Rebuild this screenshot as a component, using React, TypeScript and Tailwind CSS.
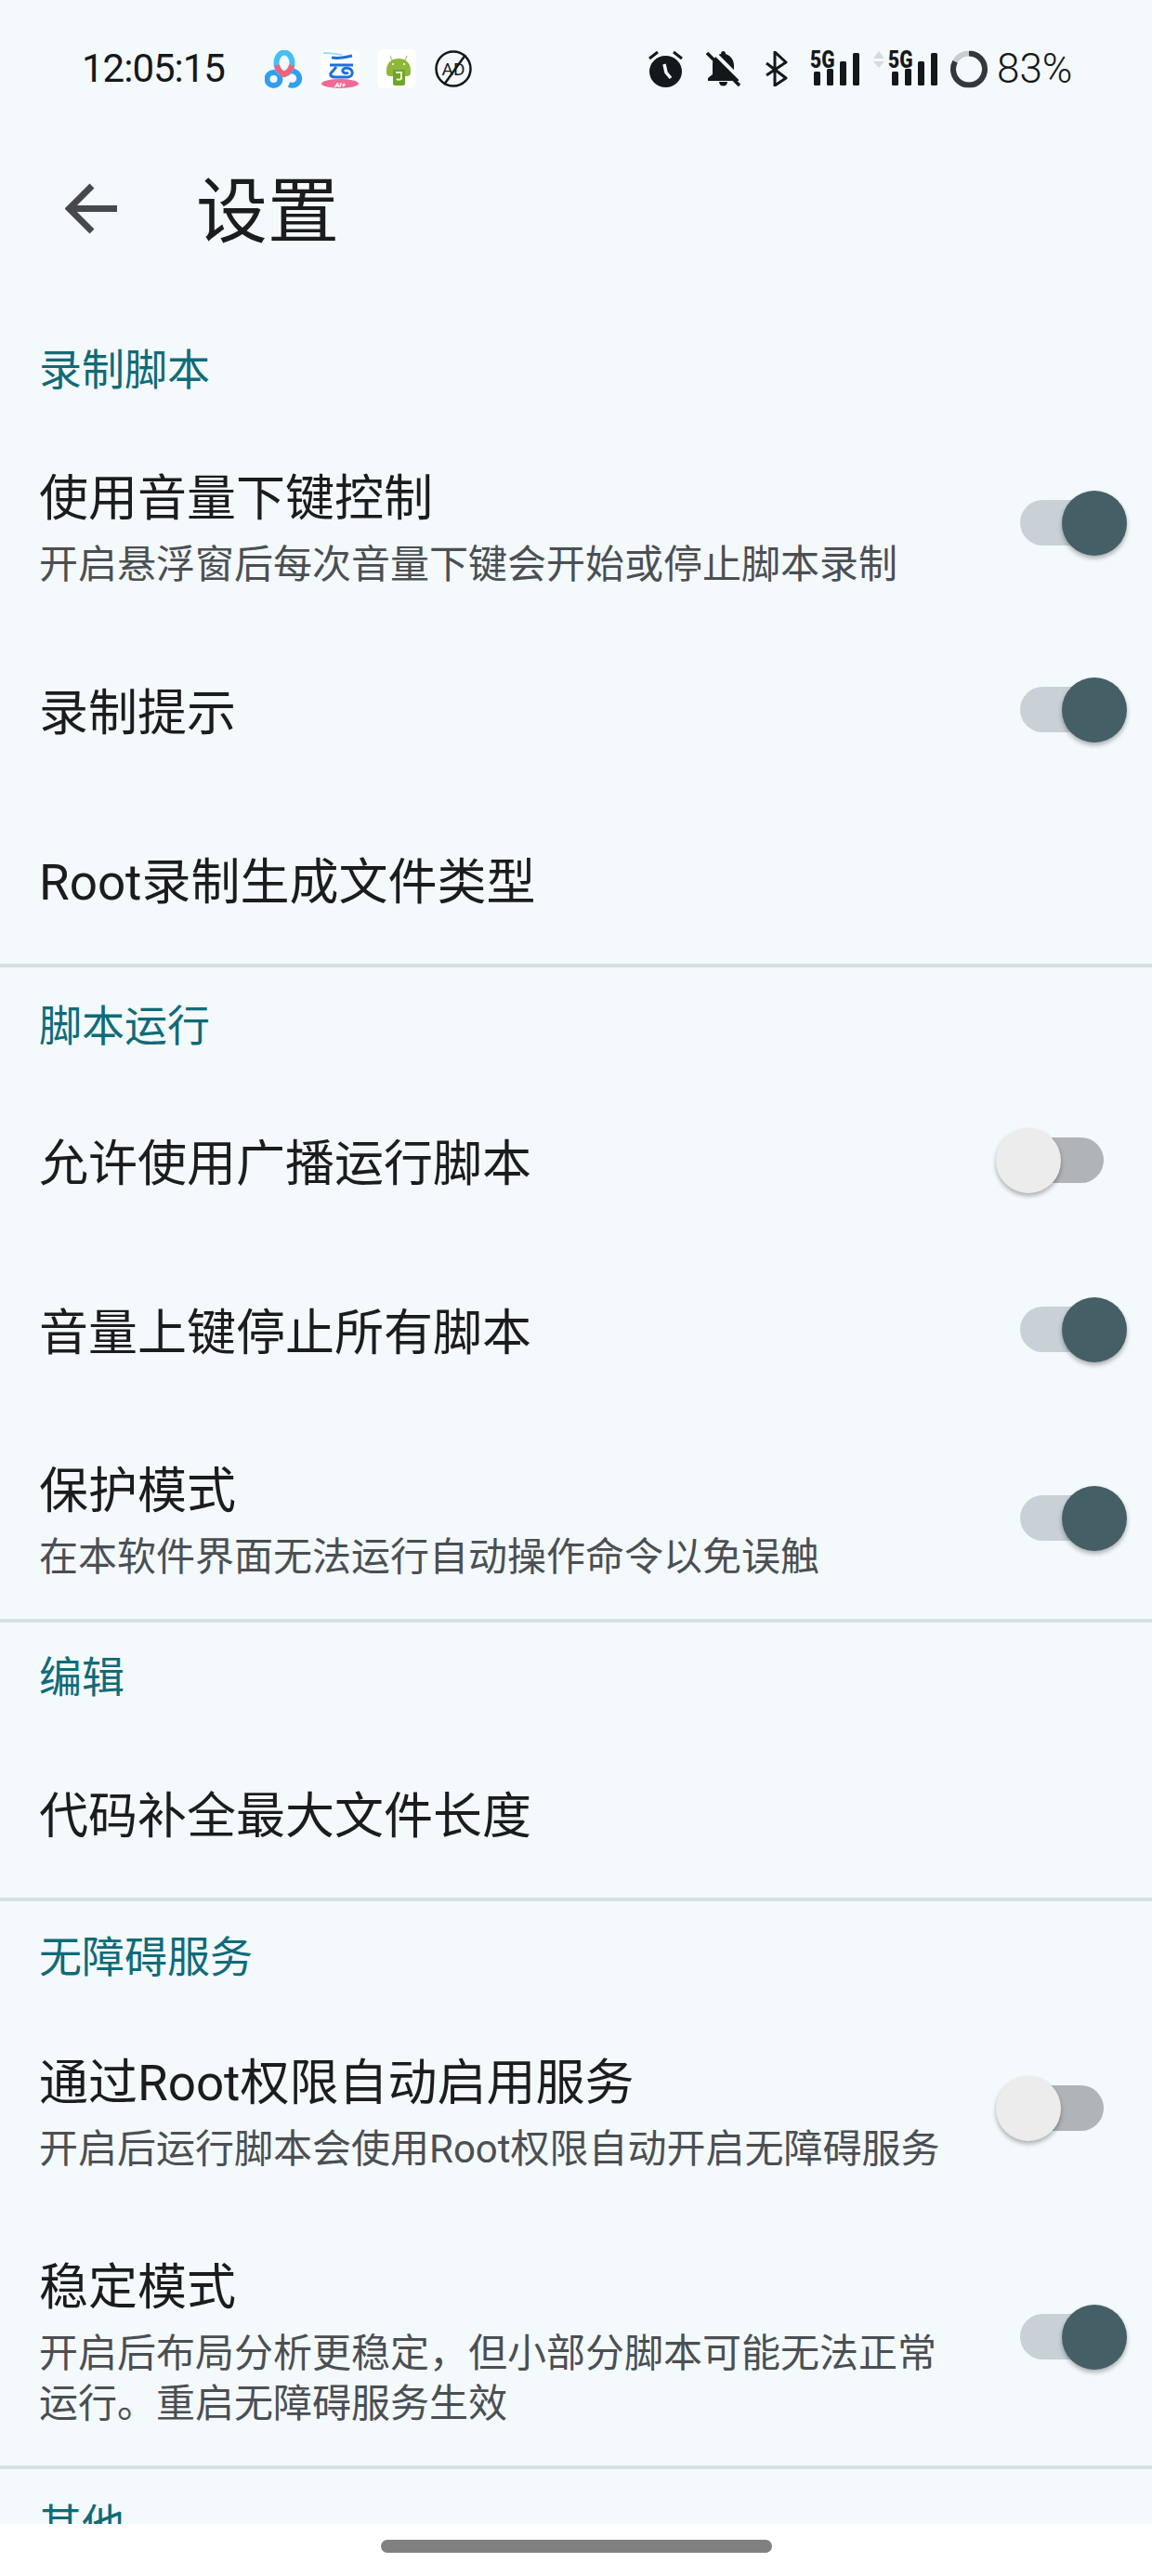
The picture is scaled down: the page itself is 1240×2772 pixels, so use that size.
import React from "react";

const Toggle = ({ on, className = "" }: { on: boolean; className?: string }) => (
  <div className={`relative h-[70px] w-[141px] shrink-0 ${className}`}>
    <div
      className={`absolute left-[26px] top-[10px] h-[49px] w-[90px] rounded-full ${on ? "bg-[#c9d1d7]" : "bg-[#b0b4b7]"}`}
    />
    <div
      className={`absolute top-0 h-[70px] w-[70px] rounded-full shadow-[0_3px_5px_rgba(0,0,0,0.3)] ${on ? "left-[71px] bg-[#455f67]" : "left-0 bg-[#ececec]"}`}
    />
  </div>
);

const Heading = ({ children, className }: { children: React.ReactNode; className: string }) => (
  <div className={`flex items-center pl-[42px] text-[46px] text-[#0f6b78] ${className}`}>{children}</div>
);

const Divider = () => <div className="h-[4px] bg-[#d8dfe3]" />;

interface RowProps {
  title: string;
  sub?: string[];
  toggle?: boolean;
  height: string;
  textClass?: string;
  toggleClass?: string;
}

const Row = ({ title, sub, toggle, height, textClass = "", toggleClass = "mb-[5px]" }: RowProps) => (
  <div className={`flex items-center justify-between pl-[42px] pr-[27px] ${height}`}>
    <div className={textClass}>
      <div className="text-[53px] leading-[70px] text-[#1b1c1e]">{title}</div>
      {sub && (
        <div className="mt-[9px] text-[42px] leading-[54px] text-[#4b4f53]">
          {sub.map((line) => (
            <div key={line}>{line}</div>
          ))}
        </div>
      )}
    </div>
    {toggle !== undefined && <Toggle on={toggle} className={toggleClass} />}
  </div>
);

const Baidu = () => (
  <svg viewBox="0 0 42 41" className="h-[41px] w-[42px]" fill="none">
    <circle cx="9.5" cy="31" r="7" stroke="#2f9ff0" strokeWidth="6" />
    <path d="M24 24c2-2 5-2 8-1 3 1 6 5 5 9-1 5-6 7-11 5" stroke="#2f9ff0" strokeWidth="6" />
    <ellipse cx="21" cy="14" rx="8.5" ry="11.5" stroke="#45c0f7" strokeWidth="6" />
    <path d="M13 16c1 5 4 8 8 10 4-2 7-5 8-10" stroke="#f2607a" strokeWidth="6" />
  </svg>
);

const CloudAi = () => (
  <svg viewBox="0 0 42 41" className="h-[41px] w-[42px] rounded-[6px] bg-white" fill="none">
    <path d="M3 3c6 0 14 1 20 2" stroke="#9fdcf0" strokeWidth="2" />
    <path d="M12 8c6 1 14 0 22-2" stroke="#1f6fd8" strokeWidth="3" />
    <path d="M10 16h25" stroke="#1f6fd8" strokeWidth="3" />
    <path
      d="M17 18l-6 7c-1 3 2 4 5 4h13c4 0 6-3 5-6-1-4-8-5-10-2-1 3 3 5 6 3"
      stroke="#1f6fd8"
      strokeWidth="3"
    />
    <ellipse cx="21" cy="36" rx="20" ry="5" fill="#ee6b97" />
    <text x="21" y="39.5" textAnchor="middle" fontSize="8" fontWeight="700" fontStyle="italic" fill="#fff">
      AI+
    </text>
  </svg>
);

const AndroidJ = () => (
  <svg viewBox="0 0 42 42" className="h-[42px] w-[42px] rounded-[6px] bg-white" fill="none">
    <path d="M16 12l-2-5M30 12l2-5" stroke="#b9cf7e" strokeWidth="1.5" />
    <path d="M10 23c0-9 6-13 13-13s13 4 13 13v2a4 4 0 01-4 4H14a4 4 0 01-4-4z" fill="#8db83a" />
    <path d="M17 22h13v15a2 2 0 01-2 2h-9a2 2 0 01-2-2z" fill="#6ea62c" />
    <circle cx="17" cy="16" r="1" fill="#fff" />
    <circle cx="29" cy="16" r="1" fill="#fff" />
    <path d="M20 25h6v6c0 2-4 2-5 1" stroke="#f2f5d8" strokeWidth="2" />
  </svg>
);

const AdBlock = () => (
  <svg viewBox="0 0 40 40" className="h-[40px] w-[40px]" fill="none">
    <circle cx="20" cy="20" r="18.5" stroke="#15181a" strokeWidth="2.5" />
    <text x="20" y="27" textAnchor="middle" fontSize="19" fill="#15181a" fontFamily="Roboto">
      AD
    </text>
    <path d="M33 5L10 37" stroke="#15181a" strokeWidth="2.5" />
  </svg>
);

const Alarm = () => (
  <svg viewBox="0 0 37 40" className="h-[40px] w-[37px]" fill="none">
    <ellipse cx="18.5" cy="23" rx="17.5" ry="17" fill="#15181a" />
    <path d="M1 9l9-7M36 9l-9-7" stroke="#15181a" strokeWidth="3" />
    <path d="M17 15l2 9 5 6" stroke="#f4f9fc" strokeWidth="3.5" />
  </svg>
);

const BellOff = () => (
  <svg viewBox="0 0 37 39" className="h-[39px] w-[37px]" fill="none">
    <path d="M18 0a3 3 0 013 3c6 2 9 7 9 13v9l5 4v3H2v-3l5-4V13c0-4 4-9 9-10a3 3 0 012-3z" fill="#15181a" />
    <path d="M14 33h9a4.500 4.500 0 01-9 0z" fill="#15181a" />
    <path d="M5 -2l34 34" stroke="#f4f9fc" strokeWidth="4" />
    <path d="M1 2l35 35" stroke="#15181a" strokeWidth="3.5" />
  </svg>
);

const Bluetooth = () => (
  <svg viewBox="0 0 24 38" className="h-[38px] w-[24px]" fill="none">
    <path d="M1 13l21 16-12 8V1l12 11L1 26" stroke="#15181a" strokeWidth="3" strokeLinejoin="round" />
  </svg>
);

const Signal = () => (
  <div className="relative h-[40px] w-[53px]">
    <svg viewBox="0 0 53 40" className="h-[40px] w-[53px]" fill="#15181a">
      <rect x="4" y="23" width="7" height="15" rx="1.5" />
      <rect x="18" y="20" width="7" height="18" rx="1.5" />
      <rect x="32" y="12" width="7" height="26" rx="1.5" />
      <rect x="46" y="3" width="7" height="35" rx="1.5" />
    </svg>
    {/* 5G label sits over the bars, squeezed like the system font */}
    <span className="absolute left-0 top-[1px] origin-left scale-x-[0.84] text-[25px] font-black leading-[19px] text-[#15181a]">
      5G
    </span>
  </div>
);

const DataArrows = () => (
  <svg viewBox="0 0 12 40" className="h-[40px] w-[12px]" fill="#d6dadc">
    <path d="M0 9l6-8 6 8z" />
    <path d="M0 12h12l-6 7z" />
  </svg>
);

const BatteryRing = () => (
  <svg viewBox="0 0 40 40" className="h-[41px] w-[40px] -rotate-90" fill="none">
    <circle cx="20" cy="20" r="17" stroke="#c9cdd0" strokeWidth="6" />
    <circle cx="20" cy="20" r="17" stroke="#33383b" strokeWidth="6" pathLength="100" strokeDasharray="83 17" />
  </svg>
);

export default function App() {
  return (
    <div className="flex h-[2772px] w-[1240px] flex-col overflow-hidden bg-[#f4f9fc] font-['Roboto','Noto_Sans_CJK_SC',sans-serif]">
      <div className="relative flex-1 overflow-hidden">
        {/* status bar */}
        <div className="flex h-[148px] items-center pl-[88px] text-[#15181a]">
          <span className="w-[156px] text-[42px] leading-none tracking-[-1px]">12:05:15</span>
          <div className="ml-[41px]"><Baidu /></div>
          <div className="ml-[18px]"><CloudAi /></div>
          <div className="ml-[19px]"><AndroidJ /></div>
          <div className="ml-[20px]"><AdBlock /></div>
          <div className="ml-[190px]"><Alarm /></div>
          <div className="ml-[25px]"><BellOff /></div>
          <div className="ml-[27px]"><Bluetooth /></div>
          <div className="ml-[24px]"><Signal /></div>
          <div className="ml-[15px]"><DataArrows /></div>
          <div className="ml-[4px]"><Signal /></div>
          <div className="ml-[14px]"><BatteryRing /></div>
          <span className="ml-[10px] text-[44px] font-light leading-none">83%</span>
        </div>

        <div className="mb-[36px] flex h-[156px] items-center pl-[70px]">
          <svg viewBox="0 0 56 55" className="mb-[3px] h-[55px] w-[56px]" fill="none">
            <path d="M56 27.500H5M29 3L4.500 27.500 29 52" stroke="#47484d" strokeWidth="7" />
          </svg>
          <span className="ml-[85px] pt-[7px] text-[77px] leading-none text-[#1b1c1e]">设置</span>
        </div>

        <Heading className="h-[116px]">录制脚本</Heading>
        <Row title="使用音量下键控制" sub={["开启悬浮窗后每次音量下键会开始或停止脚本录制"]} toggle height="h-[219px]" textClass="pt-[5px]" />
        <Row title="录制提示" toggle height="h-[182px]" textClass="pt-[4px]" />
        <Row title="Root录制生成文件类型" height="h-[180px]" textClass="pt-[6px]" />
        <Divider />

        <Heading className="h-[121px] pt-[6px]">脚本运行</Heading>
        <Row title="允许使用广播运行脚本" toggle={false} height="h-[182px]" toggleClass="mb-[8px]" />
        <Row title="音量上键停止所有脚本" toggle height="h-[182px]" toggleClass="mb-[8px]" />
        <Row title="保护模式" sub={["在本软件界面无法运行自动操作命令以免误触"]} toggle height="h-[216px]" textClass="pt-[4px]" toggleClass="mb-[1px]" />
        <Divider />

        <Heading className="h-[115px] pt-[4px]">编辑</Heading>
        <Row title="代码补全最大文件长度" height="h-[181px]" textClass="pt-[7px]" />
        <Divider />

        <Heading className="h-[116px] pt-[4px]">无障碍服务</Heading>
        <Row title="通过Root权限自动启用服务" sub={["开启后运行脚本会使用Root权限自动开启无障碍服务"]} toggle={false} height="h-[219px]" textClass="pt-[3px]" />
        <Row
          title="稳定模式"
          sub={["开启后布局分析更稳定，但小部分脚本可能无法正常", "运行。重启无障碍服务生效"]}
          toggle
          height="h-[272px]"
          textClass="pt-[7px]"
        />
        <Divider />

        <Heading className="h-[116px] pt-[4px]">其他</Heading>
      </div>

      <div className="h-[56px] shrink-0 bg-white pt-[17px]">
        <div className="mx-auto h-[14px] w-[421px] rounded-full bg-[#808080]" />
      </div>
    </div>
  );
}
